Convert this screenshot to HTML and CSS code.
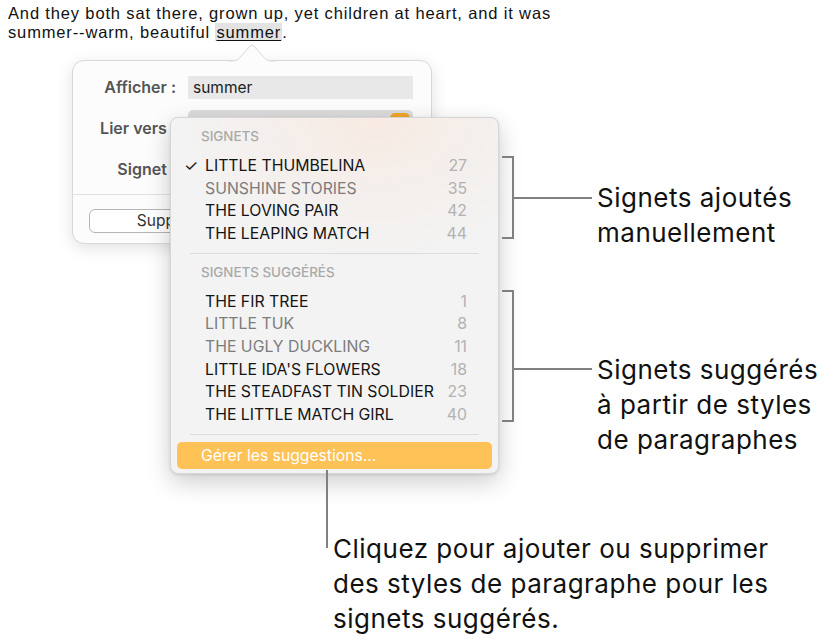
FILE: index.html
```html
<!DOCTYPE html>
<html lang="fr">
<head>
<meta charset="utf-8">
<title>Signets</title>
<link rel="stylesheet" href="styles.css">
</head>
<body>
<div class="canvas">
  <p class="doc">And they both sat there, grown up, yet children at heart, and it was<br>summer--warm, beautiful <span class="sel">summer</span>.</p>

  <div class="popover">
    <svg class="pop-arrow" width="48" height="20" viewBox="0 0 48 20"><path d="M0 19.5 L4 19.5 Q8 19.5 11 16.5 L22 4 Q24 2 26 4 L37 16.5 Q40 19.5 44 19.5 L48 19.5" fill="#fcfcfc" stroke="#d9d9d9" stroke-width="1"/><rect x="0" y="19.5" width="48" height="1" fill="#fcfcfc"/></svg>
    <div class="pop-row r1"><span class="lbl">Afficher :</span><span class="field">summer</span></div>
    <div class="pop-row r2"><span class="lbl">Lier vers :</span><span class="field f2"><span class="knob"></span></span></div>
    <div class="pop-row r3"><span class="lbl">Signet :</span><span class="field f3"></span></div>
    <div class="pop-sep"></div>
    <div class="pop-btns"><span class="btn">Supprimer</span></div>
  </div>

  <div class="menu">
    <div class="mhead">SIGNETS</div>
    <ul class="items">
      <li class="item"><span class="chk">✓</span><span class="name">LITTLE THUMBELINA</span><span class="num">27</span></li>
      <li class="item dim"><span class="chk"></span><span class="name">SUNSHINE STORIES</span><span class="num">35</span></li>
      <li class="item"><span class="chk"></span><span class="name">THE LOVING PAIR</span><span class="num">42</span></li>
      <li class="item"><span class="chk"></span><span class="name">THE LEAPING MATCH</span><span class="num">44</span></li>
    </ul>
    <div class="msep"></div>
    <div class="mhead h2">SIGNETS SUGGÉRÉS</div>
    <ul class="items">
      <li class="item"><span class="chk"></span><span class="name">THE FIR TREE</span><span class="num">1</span></li>
      <li class="item dim"><span class="chk"></span><span class="name">LITTLE TUK</span><span class="num">8</span></li>
      <li class="item dim"><span class="chk"></span><span class="name">THE UGLY DUCKLING</span><span class="num">11</span></li>
      <li class="item"><span class="chk"></span><span class="name">LITTLE IDA'S FLOWERS</span><span class="num">18</span></li>
      <li class="item"><span class="chk"></span><span class="name">THE STEADFAST TIN SOLDIER</span><span class="num">23</span></li>
      <li class="item"><span class="chk"></span><span class="name">THE LITTLE MATCH GIRL</span><span class="num">40</span></li>
    </ul>
    <div class="msep"></div>
    <div class="manage">Gérer les suggestions...</div>
  </div>

  <svg class="callouts" width="838" height="643" viewBox="0 0 838 643">
    <g fill="none" stroke="#808080" stroke-width="2">
      <path d="M502 157 H513 V238 H502"/>
      <path d="M513 198 H592"/>
      <path d="M502 291 H513 V421 H502"/>
      <path d="M513 369 H592"/>
      <path d="M327 470 V548"/>
    </g>
  </svg>

  <p class="note n1">Signets ajoutés<br>manuellement</p>
  <p class="note n2">Signets suggérés<br>à partir de styles<br>de paragraphes</p>
  <p class="note n3">Cliquez pour ajouter ou supprimer<br>des styles de paragraphe pour les<br>signets suggérés.</p>
</div>
</body>
</html>
```

FILE: styles.css
```css
* { box-sizing: border-box; }
html, body { margin: 0; padding: 0; background: #fff; }
.canvas {
  position: relative;
  width: 838px;
  height: 643px;
  overflow: hidden;
  font-family: Inter, "Liberation Sans", sans-serif;
}
.doc {
  margin: 0;
  padding: 4px 8px 0;
  font-family: "Liberation Sans", Arial, sans-serif;
  font-size: 16.5px;
  letter-spacing: 0.85px;
  line-height: 19px;
  color: #111;
}
.sel {
  background: #e3e3e3;
  text-decoration: underline;
  text-underline-offset: 2px;
  padding: 0 1px;
}

/* popover */
.popover {
  position: absolute;
  left: 72px;
  top: 60px;
  width: 360px;
  height: 184px;
  background: #fcfcfc;
  border: 1px solid #d9d9d9;
  border-radius: 12px;
  box-shadow: 0 4px 16px rgba(0,0,0,0.12);
  padding-top: 14px;
}
.pop-arrow {
  position: absolute;
  left: 155px;
  top: -19px;
}
.pop-row {
  display: flex;
  align-items: center;
  height: 24px;
}
.r2 { margin-top: 11px; align-items: flex-start; height: 30px; }
.r2 .lbl { padding-top: 8px; }
.r3 { margin-top: 17px; }
.lbl {
  width: 103px;
  text-align: right;
  font-weight: 600;
  font-size: 16px;
  color: #555;
  flex: none;
  white-space: nowrap;
}
.field {
  margin-left: 12px;
  width: 225px;
  height: 23px;
  background: #e8e8e8;
  font-size: 15.5px;
  color: #222;
  padding-left: 5px;
  line-height: 23px;
  position: relative;
}
.f2 { height: 24px; border-radius: 5px; background: #dcdcdc; }
.f3 { background: transparent; }
.knob {
  position: absolute;
  right: 3px;
  top: 3px;
  width: 20px;
  height: 18px;
  border-radius: 5px;
  background: #f0a72a;
}
.pop-sep {
  margin-top: 13px;
  height: 1px;
  background: #e2e2e2;
}
.pop-btns {
  padding: 14px 0 0 16px;
}
.btn {
  display: inline-block;
  width: 172px;
  height: 24px;
  border: 1px solid #b5b5b5;
  border-radius: 6px;
  background: #fff;
  text-align: center;
  font-size: 15.5px;
  line-height: 22px;
  color: #333;
}

/* menu */
.menu {
  position: absolute;
  left: 170px;
  top: 117px;
  width: 329px;
  height: 357px;
  border: 1px solid #d6d6d6;
  border-radius: 8px;
  background: radial-gradient(ellipse 60% 40% at 62% 0%, #f8ebe3 0%, #f4efec 55%, #f3f3f3 100%);
  background-color: #f3f3f3;
  box-shadow: 0 8px 24px rgba(0,0,0,0.2), 0 1px 3px rgba(0,0,0,0.1);
  padding-top: 7px;
}
.mhead {
  padding-left: 30px;
  font-size: 13.4px;
  line-height: 22px;
  color: #a9a9a9;
  font-weight: 500;
}
.h2 { margin-top: 7px; }
.items {
  list-style: none;
  margin: 7px 0 0;
  padding: 0;
}
.item {
  display: flex;
  align-items: center;
  height: 22.7px;
  font-size: 15.8px;
  color: #141414;
  padding-right: 31px;
}
.item.dim { color: #7c7c7c; }
.chk {
  width: 34px;
  flex: none;
  padding-left: 13px;
  font-size: 16px;
  color: #222;
}
.name { flex: 1; white-space: nowrap; }
.num { color: #b2b2b2; text-align: right; }
.msep {
  margin: 8px 19px 0;
  height: 1px;
  background: #dcdcdc;
}
.manage {
  margin: 7px 6px 0;
  height: 27px;
  border-radius: 5px;
  background: #ffc257;
  color: #fff;
  font-size: 15.7px;
  line-height: 27px;
  padding-left: 24px;
}

/* callouts */
.callouts {
  position: absolute;
  left: 0;
  top: 0;
}
.note {
  position: absolute;
  margin: 0;
  font-size: 26px;
  letter-spacing: 0.5px;
  line-height: 35px;
  color: #111;
  white-space: nowrap;
}
.n1 { left: 597px; top: 180px; }
.n2 { left: 597px; top: 352px; }
.n3 { left: 333px; top: 531px; }
```
